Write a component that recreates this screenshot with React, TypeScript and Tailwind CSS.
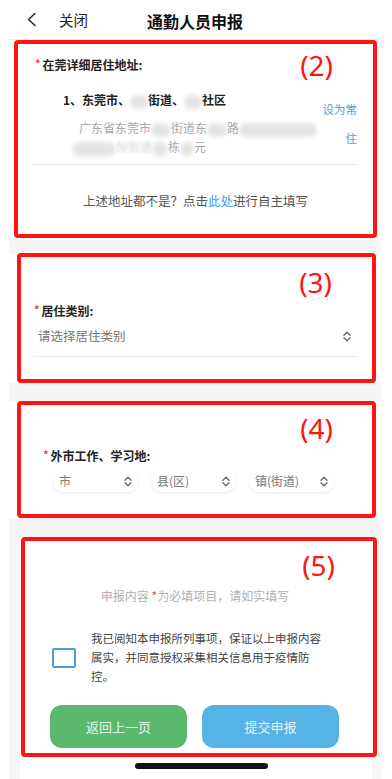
import React from 'react'

const font = "font-['Noto_Sans_CJK_SC','Noto_Sans',sans-serif]"

function Blob({ w, h = 14 }: { w: number; h?: number }) {
  return (
    <span
      className="inline-block align-middle rounded-full bg-[#e4e4e4] blur-[2px]"
      style={{ width: w, height: h }}
    />
  )
}

function UpDown() {
  return (
    <svg width="10" height="11" viewBox="0 0 10 11" fill="none" stroke="#6b6b6b" strokeWidth="1.4" strokeLinecap="round" strokeLinejoin="round">
      <path d="M2 4.2 L5 1.3 L8 4.2" />
      <path d="M2 6.8 L5 9.7 L8 6.8" />
    </svg>
  )
}

function Mark({ n }: { n: number }) {
  return <span className="text-[28px] leading-[34px] text-[#ff1414] font-['Noto_Sans',sans-serif]">({n})</span>
}

function Star() {
  return <span className="text-[11px] text-[#e5484d] mr-[2px] relative top-[-2px]">*</span>
}

export default function App() {
  return (
    <div className={`min-h-screen bg-white ${font}`}>
      <div className="ml-[9px] w-[372px] bg-white">
        {/* header */}
        <header className="grid grid-cols-[1fr_auto_1fr] items-center h-[40px] border-b border-[#ececec]">
          <div className="flex items-center pl-[17px] gap-[22px]">
            <svg width="11" height="15" viewBox="0 0 11 15" fill="none" stroke="#222" strokeWidth="1.4" strokeLinecap="round" strokeLinejoin="round">
              <path d="M9 1.5 L2.5 7.5 L9 13.5" />
            </svg>
            <span className="text-[14.5px] text-[#222]">关闭</span>
          </div>
          <h1 className="text-[16px] font-bold text-[#111] mt-[2px]">通勤人员申报</h1>
          <div />
        </header>

        {/* section 2 */}
        <section className="bg-white h-[200px]">
          <div className="ml-[5px] mr-[4px] h-[198px] border-[4px] border-[#ff1414] rounded-[4px]">
            <div className="flex items-center justify-between pl-[17px] pr-[40px] pt-[4px]">
              <div className="text-[12px] font-bold text-[#222] leading-[20px]">
                <Star />在莞详细居住地址:
              </div>
              <Mark n={2} />
            </div>
            <div className="flex mt-[8px]">
              <div className="flex-1 pl-[45px]">
                <div className="text-[12px] font-bold text-[#222] leading-[20px] whitespace-nowrap">
                  1、东莞市、<Blob w={18} />街道、<Blob w={18} />社区
                </div>
                <div className="mt-[8px] pl-[16px] text-[12px] text-[#a8a8a8] leading-[19px] whitespace-nowrap">
                  广东省东莞市<Blob w={20} />街道东<Blob w={20} />路<Blob w={78} />
                </div>
                <div className="pl-[9px] text-[12px] text-[#a8a8a8] leading-[19px] whitespace-nowrap">
                  <Blob w={44} /><span className="text-[#d4d4d4] blur-[1px]">恒街道</span><Blob w={16} />栋<Blob w={14} />元
                </div>
              </div>
              <div className="w-[36px] mr-[16px] mt-[5px] text-right text-[11.5px] leading-[29px] text-[#4ba0dc]">
                设为常住
              </div>
            </div>
            <div className="ml-[15px] mr-[16px] mt-[8px] border-t border-[#e8e8e8]" />
            <p className="mt-[26px] text-center text-[12.5px] leading-[20px] text-[#555]">
              上述地址都不是？点击<span className="text-[#3c9ce0]">此处</span>进行自主填写
            </p>
          </div>
        </section>

        <div className="h-[13px] bg-[#f5f5f5]" />

        {/* section 3 */}
        <section className="bg-white">
          <div className="ml-[8px] mr-[5px] h-[130px] border-[4px] border-[#ff1414] rounded-[4px]">
            <div className="flex justify-end pr-[40px] mt-[8px]">
              <Mark n={3} />
            </div>
            <div className="mt-[2px] pl-[13px] text-[12px] font-bold text-[#222] leading-[20px]">
              <Star />居住类别:
            </div>
            <div className="mt-[5px] flex items-center justify-between pl-[17px] pr-[20px] leading-[20px]">
              <span className="text-[12.5px] text-[#777]">请选择居住类别</span>
              <UpDown />
            </div>
            <div className="ml-[12px] mr-[15px] mt-[10px] border-t border-[#e8e8e8]" />
          </div>
        </section>

        <div className="h-[18px] bg-[#f5f5f5]" />

        {/* section 4 */}
        <section className="bg-white">
          <div className="ml-[8px] mr-[5px] h-[117px] border-[4px] border-[#ff1414] rounded-[4px]">
            <div className="flex justify-end pr-[39px] mt-[6px]">
              <Mark n={4} />
            </div>
            <div className="mt-[1px] pl-[22px] text-[12px] font-bold text-[#222] leading-[20px]">
              <Star />外市工作、学习地:
            </div>
            <div className="mt-[4px] pl-[32px] flex gap-[13px]">
              {['市', '县(区)', '镇(街道)'].map((t) => (
                <div
                  key={t}
                  className="w-[85px] h-[22px] flex items-center justify-between pl-[6px] pr-[5px] rounded-[10px] bg-white shadow-[0_1px_3px_rgba(0,0,0,0.09)]"
                >
                  <span className="text-[12px] text-[#777]">{t}</span>
                  <UpDown />
                </div>
              ))}
            </div>
          </div>
        </section>

        <div className="h-[19px] bg-[#f5f5f5]" />

        {/* section 5 */}
        <section className="bg-[#f7f7f7] pl-[11px] pr-[9px]">
          <div className="bg-white h-[242px]">
            <div className="ml-[1px] -mr-[5px] h-[220px] border-[4px] border-[#ff1414] rounded-[4px] bg-white">
              <div className="flex justify-end pr-[38px] mt-[7px]">
                <Mark n={5} />
              </div>
              <p className="mt-[4px] mr-[8px] text-center text-[12px] leading-[20px] text-[#b0b0b0]">
                申报内容 <span className="text-[#e5484d]">*</span>为必填项目，请如实填写
              </p>
              <div className="mt-[23px] flex items-center pl-[27px] gap-[15px]">
                <div className="w-[24px] h-[20px] border-[2px] border-[#4a9bdc] rounded-[2px]" />
                <div className="text-[11.5px] leading-[19px] text-[#444] whitespace-nowrap">
                  <div>我已阅知本申报所列事项，保证以上申报内容</div>
                  <div>属实，并同意授权采集相关信息用于疫情防</div>
                  <div>控。</div>
                </div>
              </div>
              <div className="mt-[19px] flex pl-[25px] gap-[15px]">
                <button className="w-[137px] h-[43px] rounded-[12px] bg-[#5bb96f] text-[13px] text-[#e6f5ea]">
                  返回上一页
                </button>
                <button className="w-[137px] h-[43px] rounded-[12px] bg-[#56b3e6] text-[13px] text-[#e3f2fb]">
                  提交申报
                </button>
              </div>
            </div>
            <div className="flex justify-center pt-[6px] pl-[10px]">
              <div className="w-[133px] h-[6px] rounded-full bg-[#111]" />
            </div>
          </div>
        </section>
      </div>
    </div>
  )
}
